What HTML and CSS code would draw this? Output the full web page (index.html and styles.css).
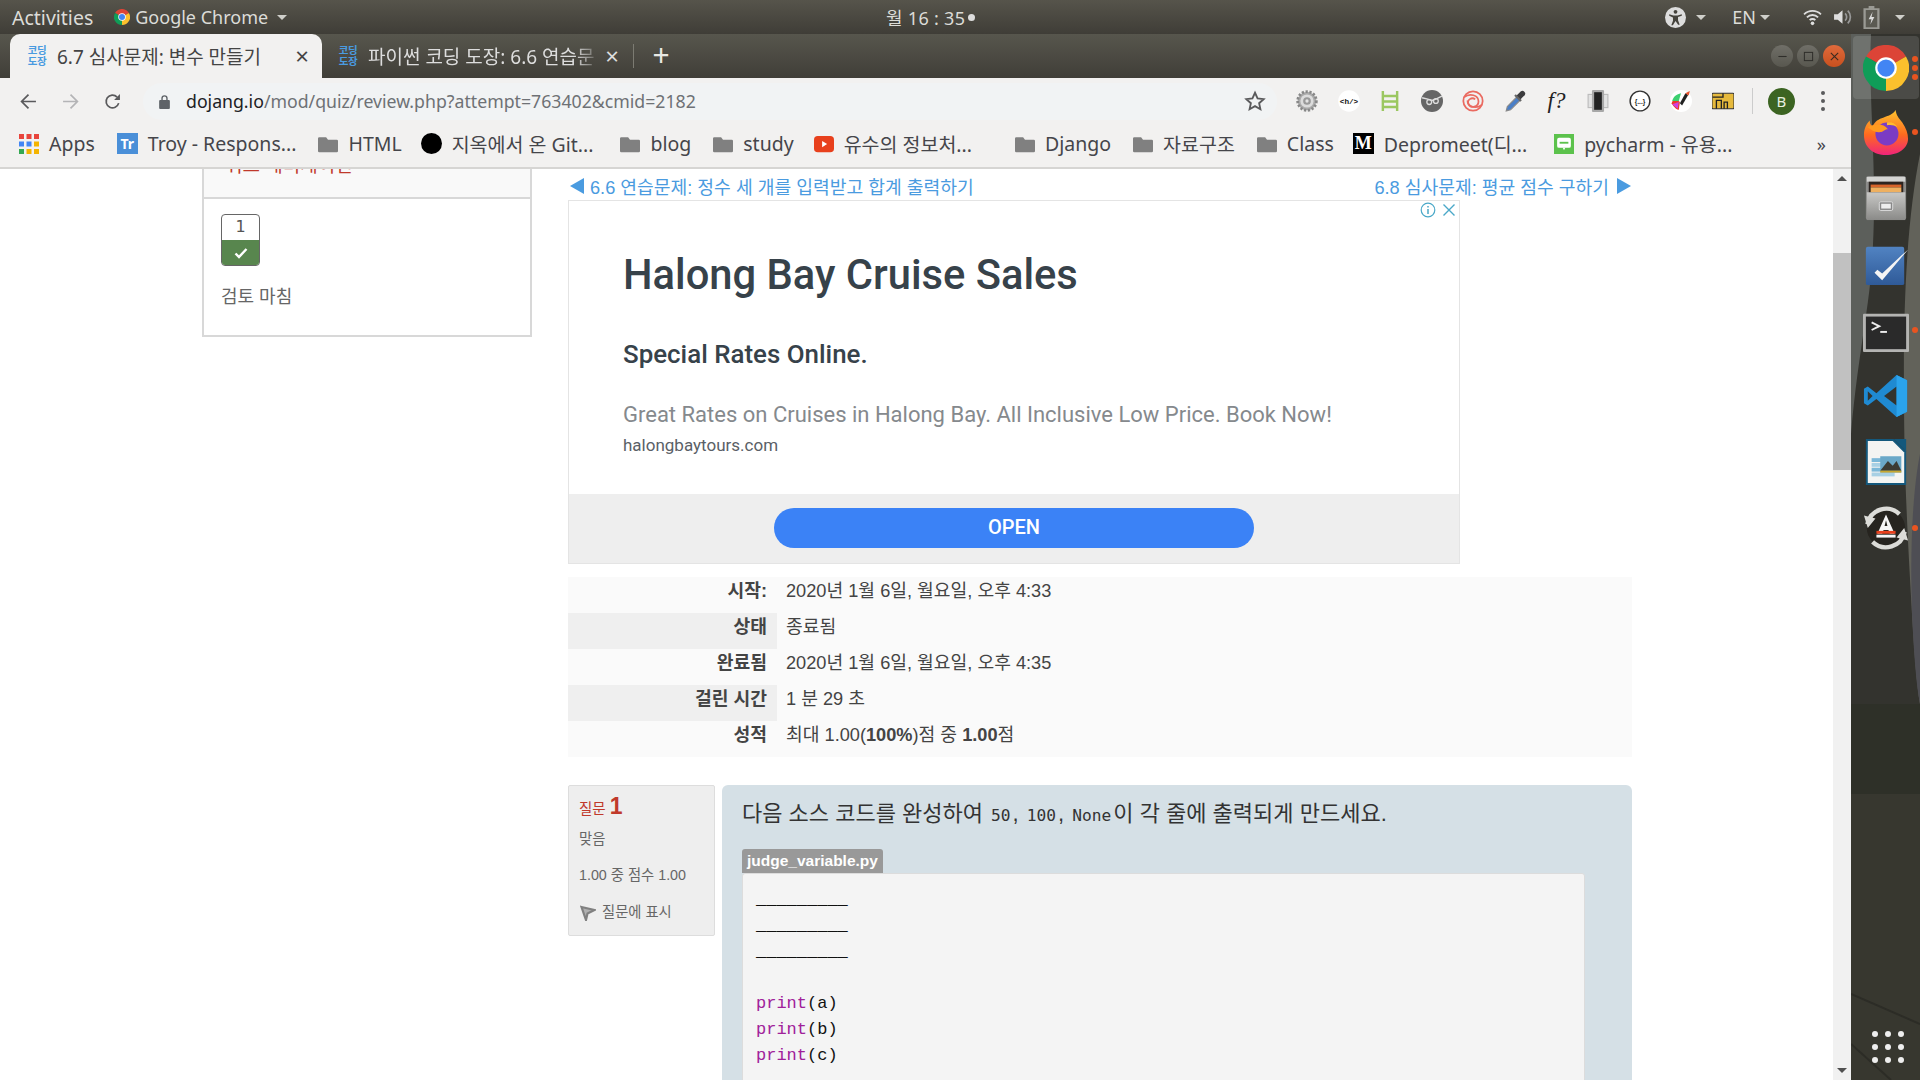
FILE: index.html
```html
<!DOCTYPE html>
<html lang="ko">

<head>
    <meta charset="UTF-8">
    <title>6.7 심사문제: 변수 만들기</title>
    <link rel="stylesheet" href="styles.css">
</head>

<body>
    <header class="panel">
        <div class="panel-left">
            <span class="panel-activities">Activities</span>
            <span class="panel-app">
                <svg class="panel-chrome" viewBox="0 0 32 32"><use href="#chrome-logo"/></svg>
                Google Chrome <i class="caret"></i>
            </span>
        </div>
        <div class="panel-clock">월 16 : 35<i class="clock-dot"></i></div>
        <div class="panel-right">
            <span class="panel-item">
                <svg class="panel-icon panel-a11y" viewBox="0 0 20 20"><circle cx="10" cy="10" r="10" fill="#ddd"/><circle cx="10" cy="4.600" r="1.800" fill="#45433c"/><path d="M4 7l4 1h4l4-1v1.400l-3.600 1.200v3l1.600 4.400h-1.500L10 13.400 7.500 17.400H6l1.600-4.400v-3L4 8.400z" fill="#45433c"/></svg>
                <i class="caret"></i>
            </span>
            <span class="panel-item panel-lang">EN<i class="caret"></i></span>
            <span class="panel-item panel-status">
                <svg class="panel-icon" viewBox="0 0 18 18"><path d="M1 6.500a11.500 11.500 0 0 1 16 0M3.700 9.300a7.500 7.500 0 0 1 10.600 0M6.300 12a3.800 3.800 0 0 1 5.400 0" fill="none" stroke="#ddd" stroke-width="1.700"/><circle cx="9" cy="15" r="1.700" fill="#ddd"/></svg>
                <svg class="panel-icon" viewBox="0 0 18 18"><path d="M1 6.500h3.500L9 2.500v13l-4.500-4H1z" fill="#ddd"/><path d="M11.500 5.500a5 5 0 0 1 0 7M14 3a8.500 8.500 0 0 1 0 12" fill="none" stroke="#999" stroke-width="1.600"/></svg>
                <svg class="panel-icon panel-battery" viewBox="0 0 14 20"><path d="M4.500 0h5v2H14v18H0V2h4.500z" fill="#9a9a94"/><rect x="2" y="3.500" width="10" height="15" fill="#5b5a52"/><path d="M8 5L4.500 11.500h2.500L6 16l3.500-6.500H7z" fill="#ddd"/></svg>
                <i class="caret"></i>
            </span>
        </div>
    </header>

    <div class="desktop">
        <div class="browser">
            <div class="tabstrip">
                <div class="tab tab-active">
                    <span class="favicon">코딩<br>도장</span>
                    <span class="tab-title">6.7 심사문제: 변수 만들기</span>
                    <span class="tab-close">×</span>
                </div>
                <div class="tab tab-back">
                    <span class="favicon">코딩<br>도장</span>
                    <span class="tab-title">파이썬 코딩 도장: 6.6 연습문</span>
                    <span class="tab-close">×</span>
                </div>
                <i class="tab-sep"></i>
                <span class="tab-new">+</span>
                <div class="window-btns">
                    <span class="win-btn">
                        <svg viewBox="0 0 12 12"><path d="M1.500 6h9" stroke="#2f2e2a" stroke-width="1.200"/></svg>
                    </span>
                    <span class="win-btn">
                        <svg viewBox="0 0 12 12"><rect x="1.500" y="1.500" width="9" height="9" fill="none" stroke="#2f2e2a" stroke-width="1.100"/></svg>
                    </span>
                    <span class="win-btn win-close">
                        <svg viewBox="0 0 12 12"><path d="M2 2l8 8M10 2l-8 8" stroke="#3a2a20" stroke-width="1.200"/></svg>
                    </span>
                </div>
            </div>

            <div class="toolbar">
                <svg class="nav-icon" viewBox="0 0 16 16"><path d="M15 8H2M8 1.500L1.500 8 8 14.500" fill="none" stroke="#5a5a5c" stroke-width="1.600"/></svg>
                <svg class="nav-icon" viewBox="0 0 16 16"><path d="M1 8h13M8 1.500L14.500 8 8 14.500" fill="none" stroke="#b4b4b6" stroke-width="1.600"/></svg>
                <svg class="nav-icon" viewBox="0 0 16 16"><path d="M13.800 9.500A6 6 0 1 1 12.300 3.800" fill="none" stroke="#5a5a5c" stroke-width="1.600"/><path d="M15 1v5.500H9.500z" fill="#5a5a5c"/></svg>
                <div class="omnibox">
                    <svg class="lock" viewBox="0 0 10 14"><path d="M2.700 6V4a2.300 2.300 0 0 1 4.600 0v2" fill="none" stroke="#5f6368" stroke-width="1.300"/><rect y="5.500" width="10" height="8.500" rx="1" fill="#5f6368"/></svg>
                    <span class="url"><b>dojang.io</b>/mod/quiz/review.php?attempt=763402&amp;cmid=2182</span>
                    <svg class="star" viewBox="0 0 24 24"><path d="M12 3l2.800 6.100 6.700.8-5 4.500 1.400 6.600L12 17.600 6.100 21l1.400-6.600-5-4.500 6.700-.8z" fill="none" stroke="#5a5a5c" stroke-width="2"/></svg>
                </div>
                <div class="extensions">
                    <svg viewBox="0 0 20 20"><circle cx="10" cy="10" r="8.500" fill="#aaa" stroke="#888" stroke-dasharray="2 1.500" stroke-width="2.500"/><circle cx="10" cy="10" r="6" fill="#dcdcdc"/><circle cx="10" cy="10" r="3.500" fill="#999"/><circle cx="10" cy="10" r="1.500" fill="#e4e4e4"/></svg>
                    <svg viewBox="0 0 20 20"><circle cx="10" cy="10" r="9.800" fill="#fff"/><text x="10" y="12.600" class="ext-code">&lt;h/&gt;</text></svg>
                    <svg viewBox="0 0 20 20"><path d="M3.500 1v18M16.500 1v18M3.500 5.500h13M3.500 10.500h13M3.500 15.500h13" fill="none" stroke="#9bc760" stroke-width="2.200"/></svg>
                    <svg viewBox="0 0 20 20"><circle cx="10" cy="10" r="10" fill="#666"/><path d="M1 7l6 1.500 3 1 4-1.500 5-2.500" fill="none" stroke="#ddd" stroke-width="1.300"/><circle cx="7.500" cy="11" r="2.200" fill="none" stroke="#ddd" stroke-width="1.200"/><circle cx="13.500" cy="10" r="2.200" fill="none" stroke="#ddd" stroke-width="1.200"/></svg>
                    <svg viewBox="0 0 20 20"><g fill="none" stroke="#ea6a60" stroke-width="1.600"><circle cx="10" cy="10" r="8.800"/><path d="M2 6.500C7 2.500 15 4.500 15 10.500c0 5-7 6.500-9 2.500s3-7 6-4.500"/><path d="M18 13.500C13 17.500 5 15.500 5 9.500"/></g></svg>
                    <svg viewBox="0 0 20 20"><path d="M2 19l1-4 8.500-8.500 3 3L6 18z" fill="#4a7fc8" stroke="#8a8a8a"/><path d="M11 5.500l3-3c1.500-2 3-2.500 4.500-1s1 3-1 4.500l-3 3z" fill="#3c3c3e"/><path d="M10 4.500l5.500 5.500" stroke="#666" stroke-width="2"/></svg>
                    <span class="ext-func">f?</span>
                    <svg viewBox="0 0 20 20"><rect x="1" y="4" width="18" height="12" fill="#e2e2e2" stroke="#bbb"/><rect x="4.500" y="0" width="11" height="20" rx="1" fill="#a8a8a8"/><rect x="6.500" y="2" width="7" height="16" fill="#222"/></svg>
                    <svg viewBox="0 0 20 20"><circle cx="10" cy="10" r="9" fill="#fff" stroke="#333" stroke-width="1.300"/><text x="10" y="12.300" class="ext-dots">{...}</text></svg>
                    <svg viewBox="0 0 20 20"><circle cx="10" cy="10" r="10" fill="#fff"/><path d="M9 11C5 7 2 9 1.500 12 3 15 6 18 8 18z" fill="#ec3a2a"/><path d="M2 10c1-4 4-6 8-7L8 10z" fill="#3cd070"/><path d="M2 13l6-2-1 6z" fill="#d040e0"/><path d="M9 12l5-9 2.500 1.500L11 14z" fill="#222"/><path d="M14 3l4-2-1 4z" fill="#e8502a"/></svg>
                    <svg viewBox="0 0 20 20"><rect y="3" width="20" height="14" rx="1" fill="#e6b93c" stroke="#333"/><path d="M.5 6.500H10V3M4 17V9.500h4.500V17M11 17v-6h3v6" fill="none" stroke="#222" stroke-width="1.200"/></svg>
                </div>
                <i class="toolbar-sep"></i>
                <span class="avatar">B</span>
                <span class="kebab"><i></i><i></i><i></i></span>
            </div>

            <div class="bookmarks">
                <span class="bm">
                    <svg class="bm-icon" viewBox="0 0 16 16"><rect width="4" height="4" fill="#e8453c"/><rect x="6" width="4" height="4" fill="#e8453c"/><rect x="12" width="4" height="4" fill="#e8453c"/><rect y="6" width="4" height="4" fill="#4285f4"/><rect x="6" y="6" width="4" height="4" fill="#4285f4"/><rect x="12" y="6" width="4" height="4" fill="#f4b400"/><rect y="12" width="4" height="4" fill="#34a853"/><rect x="6" y="12" width="4" height="4" fill="#f4b400"/><rect x="12" y="12" width="4" height="4" fill="#f4b400"/></svg>
                    Apps
                </span>
                <span class="bm"><span class="bm-troy">Tr</span>Troy - Respons...</span>
                <span class="bm"><svg class="bm-icon" viewBox="0 0 16 16"><use href="#folder"/></svg>HTML</span>
                <span class="bm bm-git"><i class="bm-dot"></i>지옥에서 온 Git...</span>
                <span class="bm"><svg class="bm-icon" viewBox="0 0 16 16"><use href="#folder"/></svg>blog</span>
                <span class="bm bm-study"><svg class="bm-icon" viewBox="0 0 16 16"><use href="#folder"/></svg>study</span>
                <span class="bm bm-wide"><svg class="bm-icon" viewBox="0 0 16 16"><rect y="1.500" width="16" height="13" rx="3" fill="#e8401c"/><path d="M6.500 5.500v5l4-2.500z" fill="#fff"/></svg>유수의 정보처...</span>
                <span class="bm"><svg class="bm-icon" viewBox="0 0 16 16"><use href="#folder"/></svg>Django</span>
                <span class="bm"><svg class="bm-icon" viewBox="0 0 16 16"><use href="#folder"/></svg>자료구조</span>
                <span class="bm bm-class"><svg class="bm-icon" viewBox="0 0 16 16"><use href="#folder"/></svg>Class</span>
                <span class="bm bm-depro"><span class="bm-medium">M</span>Depromeet(디...</span>
                <span class="bm"><svg class="bm-icon" viewBox="0 0 16 16"><rect width="16" height="16" fill="#5cc24c"/><rect x="2.500" y="3" width="11" height="8" rx="1.500" fill="#fff"/><path d="M7 11h2l-1 2z" fill="#fff"/><path d="M4.500 7h7" stroke="#5cc24c" stroke-width="1.500"/></svg>pycharm - 유용...</span>
                <span class="bm-more">»</span>
            </div>

            <div class="viewport">
                <main class="page">
                    <aside class="quiz-nav">
                        <div class="quiz-nav-head"><span>퀴즈 네비게이션</span></div>
                        <div class="quiz-nav-body">
                            <div class="qn-button">
                                <span class="qn-num">1</span>
                                <span class="qn-state">
                                    <svg viewBox="0 0 14 12"><path d="M1.500 6.500l3.500 3.500 7.500-8" fill="none" stroke="#fff" stroke-width="2.400"/></svg>
                                </span>
                            </div>
                            <a class="qn-finish">검토 마침</a>
                        </div>
                    </aside>

                    <section class="content">
                        <nav class="pager">
                            <a><i class="arrow-left"></i>6.6 연습문제: 정수 세 개를 입력받고 합계 출력하기</a>
                            <a>6.8 심사문제: 평균 점수 구하기<i class="arrow-right"></i></a>
                        </nav>

                        <div class="ad">
                            <div class="ad-flags">
                                <svg viewBox="0 0 16 16"><circle cx="8" cy="8" r="6.800" fill="none" stroke="#4aa8c8" stroke-width="1.200"/><path d="M8 7v5M8 4v1.600" stroke="#4aa8c8" stroke-width="1.500"/></svg>
                                <svg viewBox="0 0 16 16"><path d="M2.500 2.500l11 11M13.500 2.500l-11 11" stroke="#4aa8c8" stroke-width="1.400"/></svg>
                            </div>
                            <div class="ad-body">
                                <h1>Halong Bay Cruise Sales</h1>
                                <h2>Special Rates Online.</h2>
                                <p>Great Rates on Cruises in Halong Bay. All Inclusive Low Price. Book Now!</p>
                                <span class="ad-domain">halongbaytours.com</span>
                            </div>
                            <div class="ad-foot"><span class="ad-open">OPEN</span></div>
                        </div>

                        <table class="summary">
                            <tr><th>시작:</th><td>2020년 1월 6일, 월요일, 오후 4:33</td></tr>
                            <tr><th>상태</th><td>종료됨</td></tr>
                            <tr><th>완료됨</th><td>2020년 1월 6일, 월요일, 오후 4:35</td></tr>
                            <tr><th>걸린 시간</th><td>1 분 29 초</td></tr>
                            <tr><th>성적</th><td>최대 1.00(<b>100%</b>)점 중 <b>1.00</b>점</td></tr>
                        </table>

                        <div class="question">
                            <div class="q-info">
                                <h3>질문 <span>1</span></h3>
                                <p>맞음</p>
                                <p>1.00 중 점수 1.00</p>
                                <div class="q-flag">
                                    <svg viewBox="0 0 16 16"><path d="M1.500 2l13 3-7 3.500L6 15z" fill="#b0b0b0" stroke="#808080" stroke-width="2.200"/></svg>
                                    질문에 표시
                                </div>
                            </div>
                            <div class="q-content">
                                <p class="q-text">다음 소스 코드를 완성하여 <code>50</code>, <code>100</code>, <code>None</code>이 각 줄에 출력되게 만드세요.</p>
                                <span class="code-name">judge_variable.py</span>
<pre class="code">_________
_________
_________

<em>print</em>(a)
<em>print</em>(b)
<em>print</em>(c)</pre>
                            </div>
                        </div>
                    </section>
                </main>
                <div class="scrollbar">
                    <i class="sb-up"></i>
                    <div class="sb-track"><div class="sb-thumb"></div></div>
                    <i class="sb-down"></i>
                </div>
            </div>
        </div>

        <aside class="dock">
            <svg class="dock-bg" viewBox="0 0 69 1046" preserveAspectRatio="none">
                <rect width="69" height="1046" fill="#33332e"/>
                <path d="M0 0h20c-3 60 6 130 2 210-2 60-14 100-22 190z" fill="#5c5f5b"/>
                <path d="M69 120c-12 60-17 140-16 240 0 80 4 150 8 220 3 50 5 70 8 90z" fill="#62625a"/>
                <path d="M69 420c-8 40-10 100-8 160 2 40 4 70 8 90z" fill="#4e4e54"/>
                <path d="M0 670h69v90H0z" fill="#2e3028"/>
                <path d="M0 760h69v286H0z" fill="#37372f"/>
                <path d="M0 960l69 30M0 1010l40 36" stroke="#2c2c26" stroke-width="2"/>
            </svg>
            <div class="dock-item dock-active">
                <svg viewBox="0 0 32 32"><use href="#chrome-logo"/></svg>
                <span class="dock-dots"><i></i><i></i><i></i></span>
            </div>
            <div class="dock-item">
                <svg viewBox="0 0 48 48">
                    <defs><linearGradient id="fx" x1="0" y1="0" x2="0" y2="1"><stop offset="0" stop-color="#ffc42e"/><stop offset=".55" stop-color="#ff6a1f"/><stop offset="1" stop-color="#f0247a"/></linearGradient></defs>
                    <path d="M34 1c1 6 3 8 7 13 4 6 6 11 6 17 0 10-10 17-23 17S1 40 1 27C1 20 4 15 7 12c0 3 1 5 3 6 2-5 7-8 11-9 5-2 10-3 13-8z" fill="url(#fx)"/>
                    <circle cx="25" cy="26" r="12" fill="#7b3bc4"/>
                    <path d="M5 19c6-3 16-5 21 2-4 0-5 3-8 3-5 1-9-2-13-5z" fill="#ff9a1f"/>
                    <path d="M25 14c4-1 9 1 11 5-3-2-7-3-11-2z" fill="#ffbd2e"/>
                </svg>
                <span class="dock-dots"><i></i></span>
            </div>
            <div class="dock-item">
                <svg viewBox="0 0 48 48">
                    <defs><linearGradient id="cab" x1="0" y1="0" x2="0" y2="1"><stop offset="0" stop-color="#c8c8c6"/><stop offset="1" stop-color="#8a8a88"/></linearGradient></defs>
                    <rect x="3" y="1" width="42" height="46" rx="3" fill="#8c8c8a"/>
                    <rect x="4" y="2" width="40" height="5" fill="#d4d4d2"/>
                    <rect x="6" y="7" width="36" height="14" fill="#2c2420"/>
                    <rect x="8" y="10" width="32" height="3" fill="#d8642a"/>
                    <rect x="8" y="13" width="32" height="5" fill="#eeb060"/>
                    <rect x="4" y="18" width="40" height="29" fill="url(#cab)"/>
                    <rect x="17" y="28" width="14" height="9" rx="1.500" fill="#888" stroke="#ddd"/>
                    <rect x="19" y="30" width="10" height="5" fill="#eee"/>
                </svg>
            </div>
            <div class="dock-item">
                <svg viewBox="0 0 48 48">
                    <defs><linearGradient id="tsk" x1="0" y1="0" x2="0" y2="1"><stop offset="0" stop-color="#5183c2"/><stop offset="1" stop-color="#2f5a98"/></linearGradient></defs>
                    <rect x="3" y="6" width="40" height="40" rx="2" fill="url(#tsk)"/>
                    <path d="M12 33l3-3 5 4L40 15l7-6-27 32z" fill="#f4f4f4"/>
                </svg>
            </div>
            <div class="dock-item">
                <svg viewBox="0 0 48 48">
                    <rect y="7" width="48" height="40" rx="1" fill="#b4b4b2"/>
                    <rect x="3" y="10" width="42" height="34" fill="#2a2a2a"/>
                    <path d="M9 16l8 4-8 4" fill="none" stroke="#eee" stroke-width="2"/>
                    <path d="M18 26h7" stroke="#eee" stroke-width="2"/>
                </svg>
                <span class="dock-dots"><i></i></span>
            </div>
            <div class="dock-item">
                <svg viewBox="0 0 48 48">
                    <path d="M46 7.500L35 2 14 21 5 14l-4 2.500v15L5 34l9-7 21 19 11-5.500z" fill="#1f8ad2"/>
                    <path d="M35 14L22 24l13 10z" fill="#33332e"/>
                    <path d="M5 19v10l5-5z" fill="#33332e"/>
                    <path d="M35 2l11 5.500v33L35 46z" fill="#2ba3ec"/>
                </svg>
            </div>
            <div class="dock-item">
                <svg viewBox="0 0 48 48">
                    <path d="M3 0h29l13 13v35H3z" fill="#14587c"/>
                    <path d="M5 2h26l12 12v32H5z" fill="#f4f4f2"/>
                    <path d="M32 0h13v13z" fill="#14587c"/>
                    <rect x="9" y="20" width="30" height="4" fill="#7cb8d8"/>
                    <rect x="9" y="25" width="26" height="4" fill="#a8d0e4"/>
                    <rect x="9" y="30" width="30" height="4" fill="#7cb8d8"/>
                    <rect x="9" y="35" width="24" height="4" fill="#a8d0e4"/>
                    <rect x="18" y="18" width="22" height="17" fill="#6aa8c8"/>
                    <path d="M18 33l8-10 5 5 4-5 5 10z" fill="#3c3c34"/>
                    <rect x="18" y="33" width="22" height="2" fill="#c8a830"/>
                </svg>
            </div>
            <div class="dock-item">
                <svg viewBox="0 0 48 48">
                    <circle cx="24" cy="24" r="20" fill="#26241f"/>
                    <path d="M4.500 20A20 20 0 0 1 38 9.500M43.500 28A20 20 0 0 1 10 38.500" fill="none" stroke="#dcdcd8" stroke-width="4.500"/>
                    <path d="M1 11l12 3-8 10zM47 37l-12-3 8-10z" fill="#dcdcd8"/>
                    <path d="M24 10l-9 20h5l1.500-4h5l1.500 4h5zM24 16l1.500 6h-3z" fill="#f6f6f6" fill-rule="evenodd"/>
                    <rect x="14" y="27" width="20" height="3" fill="#e8401c"/>
                    <rect x="14" y="31" width="20" height="3" fill="#f6f6f6"/>
                </svg>
                <span class="dock-dots"><i></i></span>
            </div>
            <div class="dock-grid">
                <i></i><i></i><i></i><i></i><i></i><i></i><i></i><i></i><i></i>
            </div>
        </aside>
    </div>

    <svg class="defs" aria-hidden="true">
        <symbol id="chrome-logo" viewBox="0 0 32 32">
            <path d="M16 16L2.100 8A16 16 0 0 1 29.900 8z" fill="#dc4437"/>
            <path d="M16 16L29.900 8A16 16 0 0 1 16 32z" fill="#fbc02d"/>
            <path d="M16 16L16 32A16 16 0 0 1 2.100 8z" fill="#0f9d58"/>
            <circle cx="16" cy="16" r="7.500" fill="#fff"/>
            <circle cx="16" cy="16" r="6" fill="#4285f4"/>
        </symbol>
        <symbol id="folder" viewBox="0 0 16 16">
            <path d="M1 2.500h5.500l1.500 2h7a1 1 0 0 1 1 1v8a1 1 0 0 1-1 1H1a1 1 0 0 1-1-1v-10a1 1 0 0 1 1-1z" fill="#808080"/>
        </symbol>
    </svg>
</body>

</html>
```

FILE: styles.css
```css
* {
    box-sizing: border-box;
}

html,
body {
    height: 100%;
}

body {
    margin: 0;
    width: 1920px;
    height: 1080px;
    overflow: hidden;
    display: flex;
    flex-direction: column;
    font-family: "Liberation Sans", "Noto Sans CJK KR", sans-serif;
    background-color: #fff;
}

.defs {
    position: absolute;
    width: 0;
    height: 0;
}

/* top panel */
.panel {
    height: 34px;
    flex-shrink: 0;
    position: relative;
    display: flex;
    justify-content: space-between;
    align-items: center;
    padding: 0 15px 0 12px;
    background: linear-gradient(#56544b, #3f3d37);
    color: #dcdcd8;
    font-family: "Noto Sans", "Noto Sans CJK KR", sans-serif;
    font-size: 18px;
}

.panel-left,
.panel-app,
.panel-right,
.panel-item {
    display: flex;
    align-items: center;
}

.panel-left {
    gap: 21px;
}

.panel-activities {
    font-size: 19.500px;
}

.panel-app {
    gap: 5px;
}

.panel-chrome {
    width: 16px;
    height: 16px;
}

.caret {
    display: inline-block;
    width: 0;
    height: 0;
    margin-left: 4px;
    border-left: 5px solid transparent;
    border-right: 5px solid transparent;
    border-top: 5px solid #cfcfca;
}

.panel-clock {
    position: absolute;
    left: 886px;
    top: 4px;
    display: flex;
    align-items: center;
    letter-spacing: 0.3px;
}

.clock-dot {
    width: 7px;
    height: 7px;
    margin-left: 3px;
    border-radius: 50%;
    background-color: #ddd;
}

.panel-right {
    gap: 26px;
}

.panel-icon {
    width: 19px;
    height: 20px;
}

.panel-a11y {
    width: 21px;
    height: 21px;
}

.panel-battery {
    width: 17px;
    height: 23px;
}

.panel-item {
    gap: 6px;
}

.panel-lang {
    gap: 0;
    margin-right: 7px;
}

.panel-status {
    gap: 11px;
}

/* desktop */
.desktop {
    flex: 1;
    min-height: 0;
    display: flex;
}

.browser {
    width: 1851px;
    display: flex;
    flex-direction: column;
    min-width: 0;
}

.dock {
    width: 69px;
    position: relative;
    display: flex;
    flex-direction: column;
    align-items: center;
    background-color: #33332e;
    overflow: hidden;
}

/* tabs */
.tabstrip {
    height: 44px;
    flex-shrink: 0;
    display: flex;
    align-items: flex-end;
    padding-left: 10px;
    background: linear-gradient(#57564d, #403e38);
    color: #ddd;
    font-family: "Noto Sans", "Noto Sans CJK KR", sans-serif;
}

.tab {
    height: 44px;
    display: flex;
    align-items: center;
    flex-shrink: 0;
}

.tab-active {
    width: 312px;
    padding: 0 10px 0 17px;
    background-color: #f2f1f0;
    color: #444;
    border-radius: 10px 10px 0 0;
}

.tab-back {
    width: 310px;
    padding: 0 10px 0 16px;
}

.favicon {
    width: 20px;
    margin-right: 10px;
    flex-shrink: 0;
    color: #4a9be0;
    font-size: 10.500px;
    font-weight: 700;
    line-height: 11px;
    letter-spacing: -0.5px;
    text-align: center;
}

.tab-title {
    flex: 1;
    min-width: 0;
    overflow: hidden;
    white-space: nowrap;
    font-size: 19px;
}

.tab-back .tab-title {
    -webkit-mask-image: linear-gradient(to right, #000 88%, transparent);
    mask-image: linear-gradient(to right, #000 88%, transparent);
}

.tab-close {
    width: 20px;
    font-size: 24px;
    line-height: 20px;
    text-align: center;
}

.tab-sep {
    width: 1px;
    height: 24px;
    margin: 0 15px 10px 1px;
    background-color: #7c7b72;
}

.tab-new {
    width: 24px;
    height: 44px;
    color: #e8e8e4;
    font-size: 30px;
    line-height: 42px;
    text-align: center;
}

.window-btns {
    margin-left: auto;
    margin-right: 6px;
    height: 44px;
    display: flex;
    align-items: center;
    gap: 4px;
}

.win-btn {
    width: 22px;
    height: 22px;
    display: flex;
    align-items: center;
    justify-content: center;
    border-radius: 50%;
    background: linear-gradient(#706f68, #58574f);
}

.win-btn svg {
    width: 11px;
    height: 11px;
}

.win-close {
    background: linear-gradient(#e06a3c, #c8501e);
}

/* toolbar */
.toolbar {
    height: 46px;
    flex-shrink: 0;
    display: flex;
    align-items: center;
    padding: 0 0 0 20px;
    background-color: #f2f1f0;
}

.nav-icon {
    width: 17px;
    height: 17px;
    margin-right: 25px;
    flex-shrink: 0;
}

.nav-icon:nth-of-type(3) {
    margin-right: 22px;
}

.omnibox {
    width: 1134px;
    height: 37px;
    display: flex;
    align-items: center;
    padding: 0 11px 0 16px;
    border-radius: 19px;
    background-color: #f1f3f4;
    flex-shrink: 0;
}

.lock {
    width: 11px;
    height: 15px;
    margin-right: 16px;
}

.url {
    flex: 1;
    color: #6e7175;
    font-family: "Noto Sans", sans-serif;
    font-size: 17.700px;
}

.url b {
    color: #202124;
    font-weight: 400;
}

.star {
    width: 22px;
    height: 22px;
}

.extensions {
    display: flex;
    align-items: center;
    gap: 19.600px;
    margin-left: 19px;
}

.extensions svg {
    width: 22px;
    height: 22px;
    flex-shrink: 0;
}

.ext-code {
    font: 700 7px "Liberation Mono", monospace;
    text-anchor: middle;
    fill: #111;
}

.ext-dots {
    font: 700 6px "Liberation Sans", sans-serif;
    text-anchor: middle;
    fill: #222;
}

.ext-func {
    width: 22px;
    color: #222;
    font-family: "Liberation Serif", serif;
    font-size: 23px;
    font-style: italic;
    line-height: 22px;
    text-align: center;
}

.toolbar-sep {
    width: 1px;
    height: 26px;
    margin: 0 15px 0 18px;
    background-color: #ccc;
}

.avatar {
    width: 27px;
    height: 27px;
    border-radius: 50%;
    background-color: #3c6422;
    color: #e8f0e0;
    font-family: "Noto Sans", sans-serif;
    font-size: 15px;
    line-height: 27px;
    text-align: center;
}

.kebab {
    display: flex;
    flex-direction: column;
    gap: 4px;
    margin-left: 26px;
}

.kebab i {
    width: 4px;
    height: 4px;
    border-radius: 50%;
    background-color: #5a5a5c;
}

/* bookmarks */
.bookmarks {
    height: 45px;
    flex-shrink: 0;
    display: flex;
    align-items: center;
    padding: 0 0 4px 19px;
    background-color: #f2f1f0;
    border-bottom: 2px solid #d6d5d3;
    color: #45454a;
    font-family: "Noto Sans", "Noto Sans CJK KR", sans-serif;
    font-size: 19.500px;
    white-space: nowrap;
}

.bm {
    display: flex;
    align-items: center;
    gap: 10px;
    margin-right: 22px;
}

.bm-git {
    margin-left: -3px;
    margin-right: 27px;
}

.bm-study {
    margin-right: 20px;
}

.bm-wide {
    margin-right: 43px;
}

.bm-class {
    margin-right: 19px;
}

.bm-depro {
    margin-right: 27px;
}

.bm-icon {
    width: 20px;
    height: 20px;
    flex-shrink: 0;
}

.bm-troy {
    width: 21px;
    height: 21px;
    background-color: #4a8fd8;
    color: #fff;
    font-size: 14px;
    font-weight: 700;
    line-height: 21px;
    text-align: center;
}

.bm-dot {
    width: 21px;
    height: 21px;
    border-radius: 50%;
    background-color: #000;
}

.bm-medium {
    width: 21px;
    height: 21px;
    background-color: #000;
    color: #fff;
    font-family: "Liberation Serif", serif;
    font-size: 18px;
    font-weight: 700;
    line-height: 21px;
    text-align: center;
}

.bm-more {
    margin-left: auto;
    margin-right: 25px;
    font-size: 18px;
}

/* page */
.viewport {
    flex: 1;
    min-height: 0;
    display: flex;
    overflow: hidden;
}

.page {
    flex: 1;
    min-width: 0;
    display: flex;
    align-items: flex-start;
    padding-left: 202px;
    overflow: hidden;
    color: #444;
}

.scrollbar {
    width: 18px;
    height: 100%;
    display: flex;
    flex-direction: column;
    align-items: center;
    background-color: #f1f1f1;
}

.sb-up,
.sb-down {
    width: 0;
    height: 0;
    margin: 7px 0;
    border-left: 5px solid transparent;
    border-right: 5px solid transparent;
}

.sb-up {
    border-bottom: 5px solid #505050;
}

.sb-down {
    border-top: 5px solid #505050;
}

.sb-track {
    flex: 1;
    width: 100%;
    padding-top: 65px;
}

.sb-thumb {
    width: 100%;
    height: 217px;
    background-color: #c1c1c1;
}

/* quiz navigation */
.quiz-nav {
    width: 330px;
    flex-shrink: 0;
    border: 2px solid #d8d8d8;
    border-top: 0;
}

.quiz-nav-head {
    height: 30px;
    display: flex;
    align-items: flex-end;
    padding: 0 0 19px 21px;
    overflow: hidden;
    background-color: #f9f9f9;
    border-bottom: 2px solid #d8d8d8;
    color: #c0392b;
    font-size: 19px;
}

.quiz-nav-head span {
    line-height: 24px;
    white-space: nowrap;
}

.quiz-nav-body {
    height: 136px;
    padding: 15px 17px;
}

.qn-button {
    width: 39px;
    height: 52px;
    display: flex;
    flex-direction: column;
    overflow: hidden;
    border: 1px solid #666;
    border-radius: 4px;
}

.qn-num {
    height: 25px;
    color: #555;
    font-family: "DejaVu Sans", sans-serif;
    font-size: 16px;
    line-height: 24px;
    text-align: center;
}

.qn-state {
    flex: 1;
    display: flex;
    align-items: center;
    justify-content: center;
    background-color: #58864e;
}

.qn-state svg {
    width: 14px;
    height: 12px;
}

.qn-finish {
    display: block;
    margin-top: 19px;
    color: #666;
    font-size: 18px;
    line-height: 24px;
}

/* content */
.content {
    width: 1064px;
    margin-left: 36px;
    flex-shrink: 0;
}

.pager {
    height: 31px;
    display: flex;
    justify-content: space-between;
    align-items: center;
    padding: 2px 1px 0 2px;
    color: #4a9be0;
    font-size: 18.200px;
}

.pager a {
    display: flex;
    align-items: center;
}

.arrow-left,
.arrow-right {
    width: 0;
    height: 0;
    border-top: 8px solid transparent;
    border-bottom: 8px solid transparent;
}

.arrow-left {
    margin-right: 6px;
    border-right: 14px solid #4a9be0;
}

.arrow-right {
    margin-left: 8px;
    border-left: 14px solid #4a9be0;
}

/* ad */
.ad {
    width: 892px;
    height: 364px;
    position: relative;
    display: flex;
    flex-direction: column;
    border: 1px solid #e4e4e4;
}

.ad-flags {
    position: absolute;
    top: 1px;
    right: 2px;
    display: flex;
    gap: 5px;
}

.ad-flags svg {
    width: 16px;
    height: 16px;
}

.ad-body {
    flex: 1;
    padding: 50px 54px 0;
}

.ad-body h1 {
    margin: 0;
    color: #37424a;
    font-family: Roboto, sans-serif;
    font-size: 41.700px;
    font-weight: 500;
    line-height: 48px;
}

.ad-body h2 {
    margin: 39.500px 0 0;
    color: #37424a;
    font-family: Roboto, sans-serif;
    font-size: 25.900px;
    font-weight: 500;
    line-height: 30px;
}

.ad-body p {
    margin: 32.500px 0 0;
    color: #85898d;
    font-family: Roboto, sans-serif;
    font-size: 22px;
    line-height: 28px;
}

.ad-domain {
    display: block;
    margin-top: 5px;
    color: #5a6066;
    font-family: Roboto, sans-serif;
    font-size: 17px;
    line-height: 22px;
}

.ad-foot {
    height: 69px;
    display: flex;
    justify-content: center;
    padding-top: 14px;
    background-color: #eee;
}

.ad-open {
    width: 480px;
    height: 40px;
    border-radius: 20px;
    background-color: #3b82f6;
    color: #fff;
    font-family: Roboto, sans-serif;
    font-size: 20px;
    font-weight: 500;
    line-height: 38px;
    text-align: center;
}

/* summary table */
.summary {
    width: 100%;
    margin-top: 13px;
    border-collapse: collapse;
    background-color: #fafafa;
    font-size: 18.200px;
}

.summary tr {
    height: 36px;
}

.summary th {
    width: 209px;
    padding: 2px 10px 0 0;
    font-weight: 700;
    line-height: 24px;
    text-align: right;
    vertical-align: top;
}

.summary td {
    padding: 2px 0 0 9px;
    line-height: 24px;
    vertical-align: top;
}

.summary tr:nth-child(even) th {
    background-color: #efefef;
}

/* question */
.question {
    display: flex;
    gap: 7px;
    margin-top: 28px;
    align-items: flex-start;
}

.q-info {
    width: 147px;
    height: 151px;
    flex-shrink: 0;
    padding: 8px 10px;
    background-color: #eee;
    border: 1px solid #ddd;
    border-radius: 2px;
    color: #666;
    font-size: 14.300px;
}

.q-info h3 {
    margin: 0;
    color: #c0392b;
    font-size: 14.500px;
    font-weight: 400;
    line-height: 24px;
}

.q-info h3 span {
    font-size: 23px;
    font-weight: 700;
}

.q-info p {
    margin: 8px 0 0;
    line-height: 20px;
}

.q-info p + p {
    margin-top: 16px;
}

.q-flag {
    display: flex;
    align-items: center;
    gap: 6px;
    margin-top: 14px;
    padding-left: 1px;
}

.q-flag svg {
    width: 16px;
    height: 16px;
    margin-top: 6px;
}

.q-content {
    width: 910px;
    height: 320px;
    padding: 14px 20px;
    background-color: #d5e0e6;
    border-radius: 6px 6px 0 0;
}

.q-text {
    margin: 0;
    color: #333;
    font-size: 22px;
    line-height: 30px;
}

.q-text code {
    padding: 0 2px;
    font-family: "DejaVu Sans Mono", monospace;
    font-size: 16.200px;
}

.code-name {
    display: block;
    width: fit-content;
    margin-top: 18px;
    padding: 0 5px;
    background-color: #999;
    border-radius: 3px 3px 0 0;
    color: #fff;
    font-size: 15.500px;
    font-weight: 700;
    line-height: 24px;
}

.code {
    width: 843px;
    height: 260px;
    margin: 0;
    padding: 13px 13px;
    background-color: #f4f4f4;
    border: 1px solid #dcdcdc;
    border-radius: 3px;
    color: #111;
    font-family: "Liberation Mono", monospace;
    font-size: 17px;
    line-height: 26px;
}

.code em {
    color: #a0219a;
    font-style: normal;
}

/* dock */
.dock-bg {
    position: absolute;
    top: 0;
    left: 0;
    width: 69px;
    height: 1046px;
}

.dock-item {
    width: 66px;
    height: 66px;
    position: relative;
    display: flex;
    align-items: center;
    justify-content: center;
    flex-shrink: 0;
}

.dock-item svg {
    width: 46px;
    height: 46px;
}

.dock-active {
    height: 63px;
    margin-top: 2px;
    background-color: rgba(255, 255, 255, 0.12);
    border-radius: 4px;
}

.dock-dots {
    position: absolute;
    right: 1px;
    top: 50%;
    transform: translateY(-50%);
    display: flex;
    flex-direction: column;
    gap: 3px;
}

.dock-dots i {
    width: 6px;
    height: 6px;
    border-radius: 50%;
    background-color: #e95420;
}

.dock-grid {
    position: absolute;
    left: 21px;
    bottom: 17px;
    display: grid;
    grid-template-columns: repeat(3, 6px);
    gap: 7px;
}

.dock-grid i {
    width: 6px;
    height: 6px;
    border-radius: 50%;
    background-color: #eee;
}
```
